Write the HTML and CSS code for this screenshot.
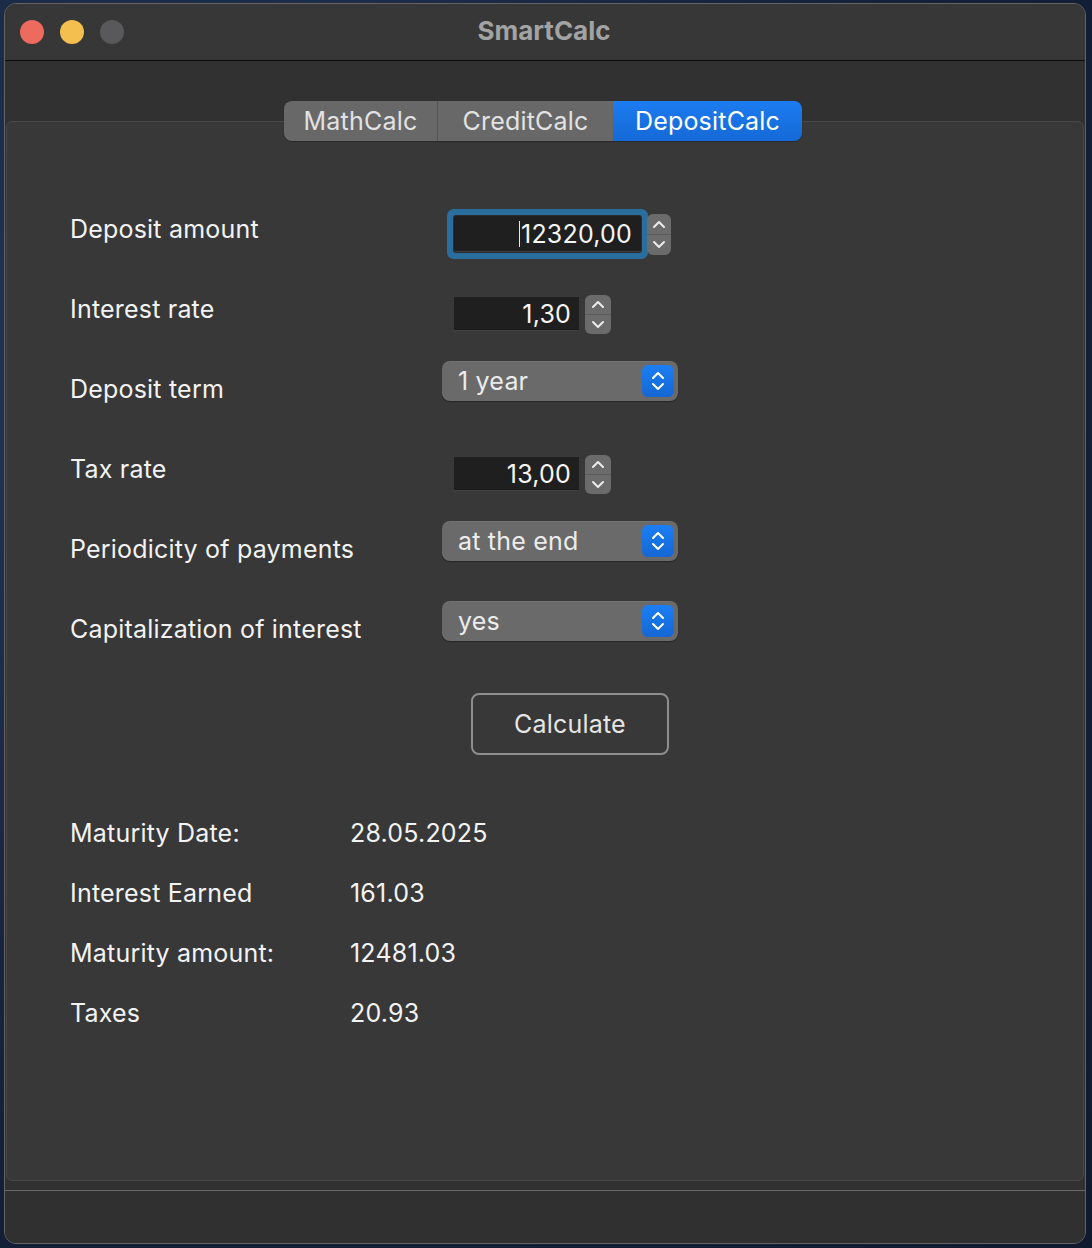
FILE: index.html
```html
<!DOCTYPE html>
<html>
<head>
<meta charset="utf-8">
<link rel="stylesheet" href="styles.css">
</head>
<body>
<div class="window">
  <div class="titlebar">
    <div class="lights">
      <span class="light red"></span>
      <span class="light yellow"></span>
      <span class="light gray"></span>
    </div>
    <div class="title">SmartCalc</div>
    <div></div>
  </div>
  <div class="content">
    <div class="tabs">
      <div class="tab t1">MathCalc</div>
      <div class="tab t2">CreditCalc</div>
      <div class="tab t3 active">DepositCalc</div>
    </div>
    <div class="pane">
      <div class="form">
        <div class="label">Deposit amount</div>
        <div class="spin">
          <div class="field focus"><span class="caret"></span>12320,00</div>
          <svg class="stepper" width="24" height="41" viewBox="0 0 24 41"><rect x="0" y="0" width="24" height="41" rx="6" fill="#6b6b6b"/><line x1="0" y1="20.5" x2="24" y2="20.5" stroke="#5a5a5a" stroke-width="1"/><path d="M7 13 L12 8 L17 13" fill="none" stroke="#ececec" stroke-width="2" stroke-linecap="round" stroke-linejoin="round"/><path d="M7 28 L12 33 L17 28" fill="none" stroke="#ececec" stroke-width="2" stroke-linecap="round" stroke-linejoin="round"/></svg>
        </div>

        <div class="label">Interest rate</div>
        <div class="spin small">
          <div class="field short">1,30</div>
          <svg class="stepper" width="26" height="39" viewBox="0 0 26 39"><rect x="0" y="0" width="26" height="39" rx="6" fill="#6b6b6b"/><line x1="0" y1="19.5" x2="26" y2="19.5" stroke="#5a5a5a" stroke-width="1"/><path d="M8 12 L13 7 L18 12" fill="none" stroke="#ececec" stroke-width="2" stroke-linecap="round" stroke-linejoin="round"/><path d="M8 27 L13 32 L18 27" fill="none" stroke="#ececec" stroke-width="2" stroke-linecap="round" stroke-linejoin="round"/></svg>
        </div>

        <div class="label">Deposit term</div>
        <div class="combo">
          <span>1 year</span>
          <span class="combo-btn"><svg width="32" height="32" viewBox="0 0 32 32"><path d="M11 13 L16 8 L21 13" fill="none" stroke="#fff" stroke-width="2" stroke-linecap="round" stroke-linejoin="round"/><path d="M11 19 L16 24 L21 19" fill="none" stroke="#fff" stroke-width="2" stroke-linecap="round" stroke-linejoin="round"/></svg></span>
        </div>

        <div class="label">Tax rate</div>
        <div class="spin small">
          <div class="field short">13,00</div>
          <svg class="stepper" width="26" height="39" viewBox="0 0 26 39"><rect x="0" y="0" width="26" height="39" rx="6" fill="#6b6b6b"/><line x1="0" y1="19.5" x2="26" y2="19.5" stroke="#5a5a5a" stroke-width="1"/><path d="M8 12 L13 7 L18 12" fill="none" stroke="#ececec" stroke-width="2" stroke-linecap="round" stroke-linejoin="round"/><path d="M8 27 L13 32 L18 27" fill="none" stroke="#ececec" stroke-width="2" stroke-linecap="round" stroke-linejoin="round"/></svg>
        </div>

        <div class="label">Periodicity of payments</div>
        <div class="combo">
          <span>at the end</span>
          <span class="combo-btn"><svg width="32" height="32" viewBox="0 0 32 32"><path d="M11 13 L16 8 L21 13" fill="none" stroke="#fff" stroke-width="2" stroke-linecap="round" stroke-linejoin="round"/><path d="M11 19 L16 24 L21 19" fill="none" stroke="#fff" stroke-width="2" stroke-linecap="round" stroke-linejoin="round"/></svg></span>
        </div>

        <div class="label">Capitalization of interest</div>
        <div class="combo">
          <span>yes</span>
          <span class="combo-btn"><svg width="32" height="32" viewBox="0 0 32 32"><path d="M11 13 L16 8 L21 13" fill="none" stroke="#fff" stroke-width="2" stroke-linecap="round" stroke-linejoin="round"/><path d="M11 19 L16 24 L21 19" fill="none" stroke="#fff" stroke-width="2" stroke-linecap="round" stroke-linejoin="round"/></svg></span>
        </div>
      </div>

      <div class="btn-row">
        <button class="calc">Calculate</button>
      </div>

      <div class="results">
        <div>Maturity Date:</div><div>28.05.2025</div>
        <div>Interest Earned</div><div>161.03</div>
        <div>Maturity amount:</div><div>12481.03</div>
        <div>Taxes</div><div>20.93</div>
      </div>
    </div>
  </div>
  <div class="bottombar"></div>
</div>
</body>
</html>
```

FILE: styles.css
```css
* { box-sizing: border-box; }

html, body {
  margin: 0;
  height: 1248px;
}

body {
  background: radial-gradient(circle at 20% 30%, #24395a 0%, #14213a 60%, #0f1a2e 100%);
  padding: 3px 6px 4px 4px;
  font-family: Inter, "Liberation Sans", sans-serif;
  letter-spacing: 0.2px;
  overflow: hidden;
}

.window {
  width: 1082px;
  height: 1241px;
  border: 1px solid #646464;
  border-radius: 12px;
  overflow: hidden;
  display: flex;
  flex-direction: column;
  background: #313131;
}

.titlebar {
  height: 57px;
  flex: none;
  background: #373737;
  border-bottom: 1px solid #0c0c0c;
  display: grid;
  grid-template-columns: 1fr auto 1fr;
  align-items: center;
}

.lights {
  display: flex;
  gap: 16px;
  padding-left: 15px;
  padding-bottom: 1px;
}

.light {
  width: 24px;
  height: 24px;
  border-radius: 50%;
  display: block;
}
.red { background: #ed6a5e; }
.yellow { background: #f5bf4f; }
.gray { background: #59595b; }

.title {
  color: #a3a3a3;
  font-weight: 700;
  font-size: 26px;
  letter-spacing: 0;
  padding-bottom: 4px;
  padding-right: 2px;
}

.content {
  flex: 1;
  padding: 40px 1px 0;
  display: flex;
  flex-direction: column;
}

.tabs {
  display: flex;
  justify-content: center;
  position: relative;
  z-index: 1;
  height: 40px;
  padding-right: 4px;
}

.tab {
  height: 40px;
  background: #686868;
  color: #e2e2e2;
  font-size: 25px;
  display: flex;
  align-items: center;
  justify-content: center;
  box-shadow: 0 1px 1px rgba(0,0,0,0.25);
}
.t1 { width: 154px; border-radius: 8px 0 0 8px; border-right: 1px solid #585858; }
.t2 { width: 175px; }
.t3 { width: 189px; border-radius: 0 8px 8px 0; }
.tab.active {
  background: linear-gradient(#1c7cf0, #1569d6);
  color: #ffffff;
}

.pane {
  margin-top: -20px;
  height: 1060px;
  flex: none;
  background: #383838;
  border: 1px solid #484848;
  border-radius: 6px;
  padding: 67px 0 0 63px;
}

.form {
  display: grid;
  grid-template-columns: 372px auto;
  grid-auto-rows: 80px;
  align-items: center;
}

.label {
  color: #f3f3f3;
  font-size: 25px;
  line-height: 30px;
}

.spin {
  display: flex;
  align-items: center;
  gap: 6px;
  margin-top: 10px;
  margin-left: 12px;
}

.field {
  height: 36px;
  width: 187px;
  background: #1f1f1f;
  border-bottom: 1px solid #3f3f3f;
  color: #f5f5f5;
  font-size: 25px;
  display: flex;
  align-items: center;
  justify-content: flex-end;
  padding-right: 9px;
}

.field.focus {
  box-shadow: 0 0 0 1px #2d2d2d, 0 0 0 7px #2a6e9e;
  border-radius: 2px;
}

.caret {
  width: 1px;
  height: 26px;
  background: #e8e8e8;
  margin-right: 1px;
}

.field.short {
  width: 125px;
  height: 34px;
  padding-right: 8px;
}

.stepper { display: block; flex: none; }

.combo {
  width: 236px;
  height: 40px;
  margin-bottom: 16px;
  background: #6a6a6a;
  border-radius: 8px;
  box-shadow: 0 1px 1px rgba(0,0,0,0.35), inset 0 1px 0 rgba(255,255,255,0.06);
  display: flex;
  align-items: center;
  justify-content: space-between;
  padding: 0 4px 0 16px;
  color: #ececec;
  font-size: 25px;
}

.combo-btn {
  width: 32px;
  height: 32px;
  border-radius: 6px;
  background: linear-gradient(#1d7ef3, #1467d4);
  display: block;
}
.combo-btn svg { display: block; }

.btn-row {
  padding-left: 401px;
  padding-top: 24px;
}

.calc {
  width: 198px;
  height: 62px;
  background: transparent;
  border: 2px solid #8e8e8e;
  border-radius: 8px;
  color: #e6e6e6;
  font-family: Inter, "Liberation Sans", sans-serif;
  letter-spacing: 0.2px;
  font-size: 25px;
  padding: 0;
}

.results {
  margin-top: 48px;
  display: grid;
  grid-template-columns: 280px auto;
  grid-auto-rows: 60px;
  align-items: center;
  color: #f3f3f3;
  font-size: 25px;
  line-height: 30px;
}

.bottombar {
  margin-top: 9px;
  flex: 1;
  border-top: 1px solid #686868;
  background: #303030;
}
```
